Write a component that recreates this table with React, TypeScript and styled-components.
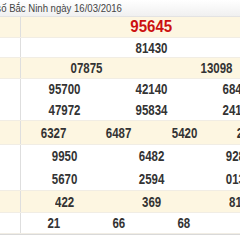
import * as React from "react";
import styled, { createGlobalStyle } from "styled-components";

const GlobalStyle = createGlobalStyle`
  html, body {
    margin: 0;
    padding: 0;
    background: #fff;
    overflow: hidden;
  }
  body {
    font-family: "Liberation Sans", Arial, sans-serif;
  }
`;

const Table = styled.div`
  width: 282px;
  border-bottom: 1px solid #d9d9d9;
`;

const Header = styled.div`
  height: 17px;
  box-sizing: border-box;
  display: flex;
  align-items: center;
  overflow: hidden;
  background: linear-gradient(#ffffff, #f0f0f0);
  border-bottom: 1px solid #e3e3e3;
`;

// the source page is drawn slightly condensed, hence the scaleX
const Title = styled.span`
  display: inline-block;
  margin-left: -18px;
  font-size: 11px;
  color: #444;
  white-space: nowrap;
  transform: scaleX(0.87);
  transform-origin: left center;
`;

const Row = styled.div<{ $alt: boolean; $h: number }>`
  display: grid;
  grid-template-columns: 21px 1fr;
  height: ${(p) => p.$h}px;
  box-sizing: border-box;
  background: ${(p) => (p.$alt ? "#fdf6e1" : "#ffffff")};
  border-bottom: 1px solid #f1ede4;
`;

const Label = styled.div`
  border-right: 1px solid #dedede;
`;

const Prizes = styled.div<{ $cols: number }>`
  display: grid;
  grid-template-columns: repeat(${(p) => p.$cols}, 1fr);
  grid-auto-rows: 1fr;
  align-items: center;
  justify-items: center;
`;

const Num = styled.span<{ $special?: boolean }>`
  display: inline-block;
  font-weight: bold;
  font-size: ${(p) => (p.$special ? "16px" : "14px")};
  color: ${(p) => (p.$special ? "#cc1010" : "#333333")};
  line-height: 1;
  transform: scaleX(${(p) => (p.$special ? 0.94 : 0.82)});
`;

interface Prize {
  cols: number;
  height: number;
  numbers: string[];
  special?: boolean;
}

const prizes: Prize[] = [
  { cols: 1, height: 21, numbers: ["95645"], special: true },
  { cols: 1, height: 20, numbers: ["81430"] },
  { cols: 2, height: 21, numbers: ["07875", "13098"] },
  {
    cols: 3,
    height: 42,
    numbers: ["95700", "42140", "68431", "47972", "95834", "24103"],
  },
  { cols: 4, height: 24, numbers: ["6327", "6487", "5420", "2415"] },
  {
    cols: 3,
    height: 46,
    numbers: ["9950", "6482", "9281", "5670", "2594", "0136"],
  },
  { cols: 3, height: 22, numbers: ["422", "369", "819"] },
  { cols: 4, height: 21, numbers: ["21", "66", "68", "05"] },
];

export default function App() {
  return (
    <>
      <GlobalStyle />
      <Table>
        <Header>
          <Title>Xổ số Bắc Ninh ngày 16/03/2016</Title>
        </Header>
        {prizes.map((prize, i) => (
          <Row key={i} $alt={i % 2 === 0} $h={prize.height}>
            <Label />
            <Prizes $cols={prize.cols}>
              {prize.numbers.map((n, j) => (
                <Num key={j} $special={prize.special}>
                  {n}
                </Num>
              ))}
            </Prizes>
          </Row>
        ))}
      </Table>
    </>
  );
}
